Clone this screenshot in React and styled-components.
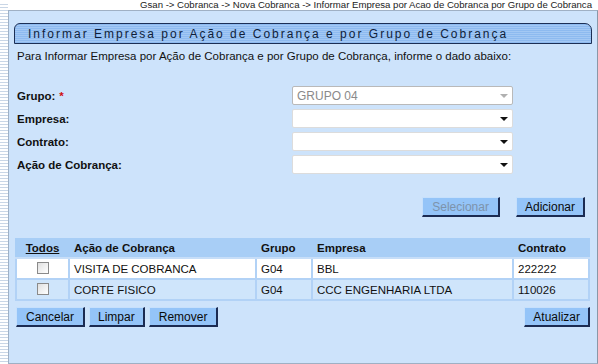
import React from "react";
import styled, { createGlobalStyle } from "styled-components";

const Global = createGlobalStyle`
  html, body { margin: 0; padding: 0; background: #ffffff; }
  body { font-family: "Liberation Sans", Arial, sans-serif; }
`;

const Page = styled.div`
  width: 598px;
  height: 364px;
  display: flex;
  background: #ffffff;
  overflow: hidden;
`;

const Strip = styled.div`
  width: 8px;
  flex: none;
  margin-top: 4px;
  background: repeating-linear-gradient(
    to bottom,
    #c9d6e6 0px,
    #c9d6e6 1px,
    #ffffff 1px,
    #ffffff 3px
  );
`;

const Main = styled.div`
  flex: 1;
  display: flex;
  flex-direction: column;
`;

const Crumb = styled.div`
  height: 10px;
  font-size: 9.6px;
  line-height: 9px;
  color: #222;
  text-align: right;
  white-space: nowrap;
  padding-right: 6px;
`;

const Panel = styled.div`
  flex: 1;
  background: #cde3fb;
  border: 1px solid #9fb0c4;
  border-right-color: #8a98a8;
  padding: 12px 5px 0 5px;
  display: flex;
  flex-direction: column;
`;

const TitleTab = styled.div`
  height: 19px;
  border: 1px solid #1c2f55;
  border-radius: 6px 7px 0 0;
  background: repeating-linear-gradient(
    to bottom,
    #8dbaf0 0px,
    #8dbaf0 1px,
    #a3c8f4 1px,
    #a3c8f4 2px
  );
  font-size: 12px;
  letter-spacing: 2px;
  line-height: 20px;
  color: #0f1e3a;
  padding-left: 13px;
  white-space: nowrap;
`;

const Intro = styled.div`
  font-size: 11.5px;
  color: #111;
  margin-top: 6px;
  padding-left: 3px;
  height: 33px;
`;

const Form = styled.div`
  display: flex;
  flex-direction: column;
  gap: 4px;
  margin-top: 3px;
`;

const Row = styled.div`
  display: flex;
  align-items: center;
  height: 19px;
`;

const Label = styled.div`
  width: 275px;
  padding-left: 3px;
  font-size: 11.5px;
  font-weight: bold;
  color: #111;
`;

const Req = styled.span`
  color: #d01010;
  font-weight: bold;
  margin-left: 4px;
`;

const Select = styled.div`
  width: 221px;
  height: 19px;
  box-sizing: border-box;
  background: #ffffff;
  border: 1px solid ${(p) => (p.disabled ? "#b9b9b9" : "#dcdcdc")};
  border-radius: 2px;
  display: flex;
  align-items: center;
  padding: 0 4px 0 4px;
  font-size: 12px;
  color: ${(p) => (p.disabled ? "#8a8a8a" : "#111")};
  &::after {
    content: "";
    border-left: 4px solid transparent;
    border-right: 4px solid transparent;
    border-top: 4px solid ${(p) => (p.disabled ? "#b0b0b0" : "#111")};
    margin-left: auto;
  }
`;

const Actions = styled.div`
  display: flex;
  justify-content: flex-end;
  gap: 16px;
  margin-top: 23px;
  padding-right: 7px;
`;

const Button = styled.button`
  font-family: "Liberation Sans", Arial, sans-serif;
  font-size: 12px;
  height: 20px;
  padding: 0 ${(p) => p.$pad || 8}px;
  background: #94c4f8;
  color: ${(p) => (p.disabled ? "#7d93ab" : "#0b0b0b")};
  border: 1px solid #c6e0fc;
  border-right: 2px solid #1b2b52;
  border-bottom: 2px solid #1b2b52;
  cursor: pointer;
  line-height: 16px;
`;

const Table = styled.table`
  margin: 21px 0 0 1px;
  width: 573px;
  table-layout: fixed;
  border-collapse: collapse;
  font-size: 11.5px;
  color: #111;
`;

const Th = styled.th`
  background: #a8cef6;
  text-align: ${(p) => p.$align || "left"};
  font-weight: bold;
  font-size: 11.5px;
  height: 19px;
  padding: 0 4px;
  border: 2px solid #c7def8;
  border-top: none;
  border-left-color: #a8cef6;
  border-right-color: #a8cef6;
  white-space: nowrap;
`;

const TodosLink = styled.span`
  text-decoration: underline;
`;

const Tr = styled.tr`
  background: ${(p) => (p.$alt ? "#cfe5fb" : "#ffffff")};
`;

const Td = styled.td`
  height: 19px;
  padding: 0 4px;
  border: 2px solid #b2d2f6;
  text-align: ${(p) => p.$align || "left"};
  white-space: nowrap;
`;

const Check = styled.span`
  display: inline-block;
  width: 10px;
  height: 10px;
  border: 1px solid #8a8a8a;
  background: linear-gradient(135deg, #e0e0e0, #ffffff);
  vertical-align: middle;
  margin-top: -2px;
`;

const Footer = styled.div`
  display: flex;
  gap: 4px;
  margin-top: 6px;
  padding-left: 2px;
  padding-right: 2px;
`;

const Spacer = styled.div`
  flex: 1;
`;

const rows = [
  { acao: "VISITA DE COBRANCA", grupo: "G04", empresa: "BBL", contrato: "222222" },
  { acao: "CORTE FISICO", grupo: "G04", empresa: "CCC ENGENHARIA LTDA", contrato: "110026" },
];

const cols = [53, 187, 56, 201, 76];

export default function App() {
  return (
    <Page>
      <Global />
      <Strip />
      <Main>
        <Crumb>
          Gsan -&gt; Cobranca -&gt; Nova Cobranca -&gt; Informar Empresa por Acao de Cobranca por Grupo de Cobranca
        </Crumb>
        <Panel>
          <TitleTab>Informar Empresa por Ação de Cobrança e por Grupo de Cobrança</TitleTab>
          <Intro>
            Para Informar Empresa por Ação de Cobrança e por Grupo de Cobrança, informe o dado abaixo:
          </Intro>
          <Form>
            <Row>
              <Label>
                Grupo:<Req>*</Req>
              </Label>
              <Select disabled>GRUPO 04</Select>
            </Row>
            <Row>
              <Label>Empresa:</Label>
              <Select />
            </Row>
            <Row>
              <Label>Contrato:</Label>
              <Select />
            </Row>
            <Row>
              <Label>Ação de Cobrança:</Label>
              <Select />
            </Row>
          </Form>
          <Actions>
            <Button disabled $pad={9}>Selecionar</Button>
            <Button>Adicionar</Button>
          </Actions>
          <Table>
            <colgroup>
              {cols.map((w, i) => (
                <col key={i} style={{ width: w }} />
              ))}
            </colgroup>
            <thead>
              <tr>
                <Th $align="center">
                  <TodosLink>Todos</TodosLink>
                </Th>
                <Th>Ação de Cobrança</Th>
                <Th>Grupo</Th>
                <Th>Empresa</Th>
                <Th>Contrato</Th>
              </tr>
            </thead>
            <tbody>
              {rows.map((r, i) => (
                <Tr key={r.acao} $alt={i % 2 === 1}>
                  <Td $align="center">
                    <Check />
                  </Td>
                  <Td>{r.acao}</Td>
                  <Td>{r.grupo}</Td>
                  <Td>{r.empresa}</Td>
                  <Td>{r.contrato}</Td>
                </Tr>
              ))}
            </tbody>
          </Table>
          <Footer>
            <Button $pad={9}>Cancelar</Button>
            <Button>Limpar</Button>
            <Button $pad={9}>Remover</Button>
            <Spacer />
            <Button>Atualizar</Button>
          </Footer>
        </Panel>
      </Main>
    </Page>
  );
}
